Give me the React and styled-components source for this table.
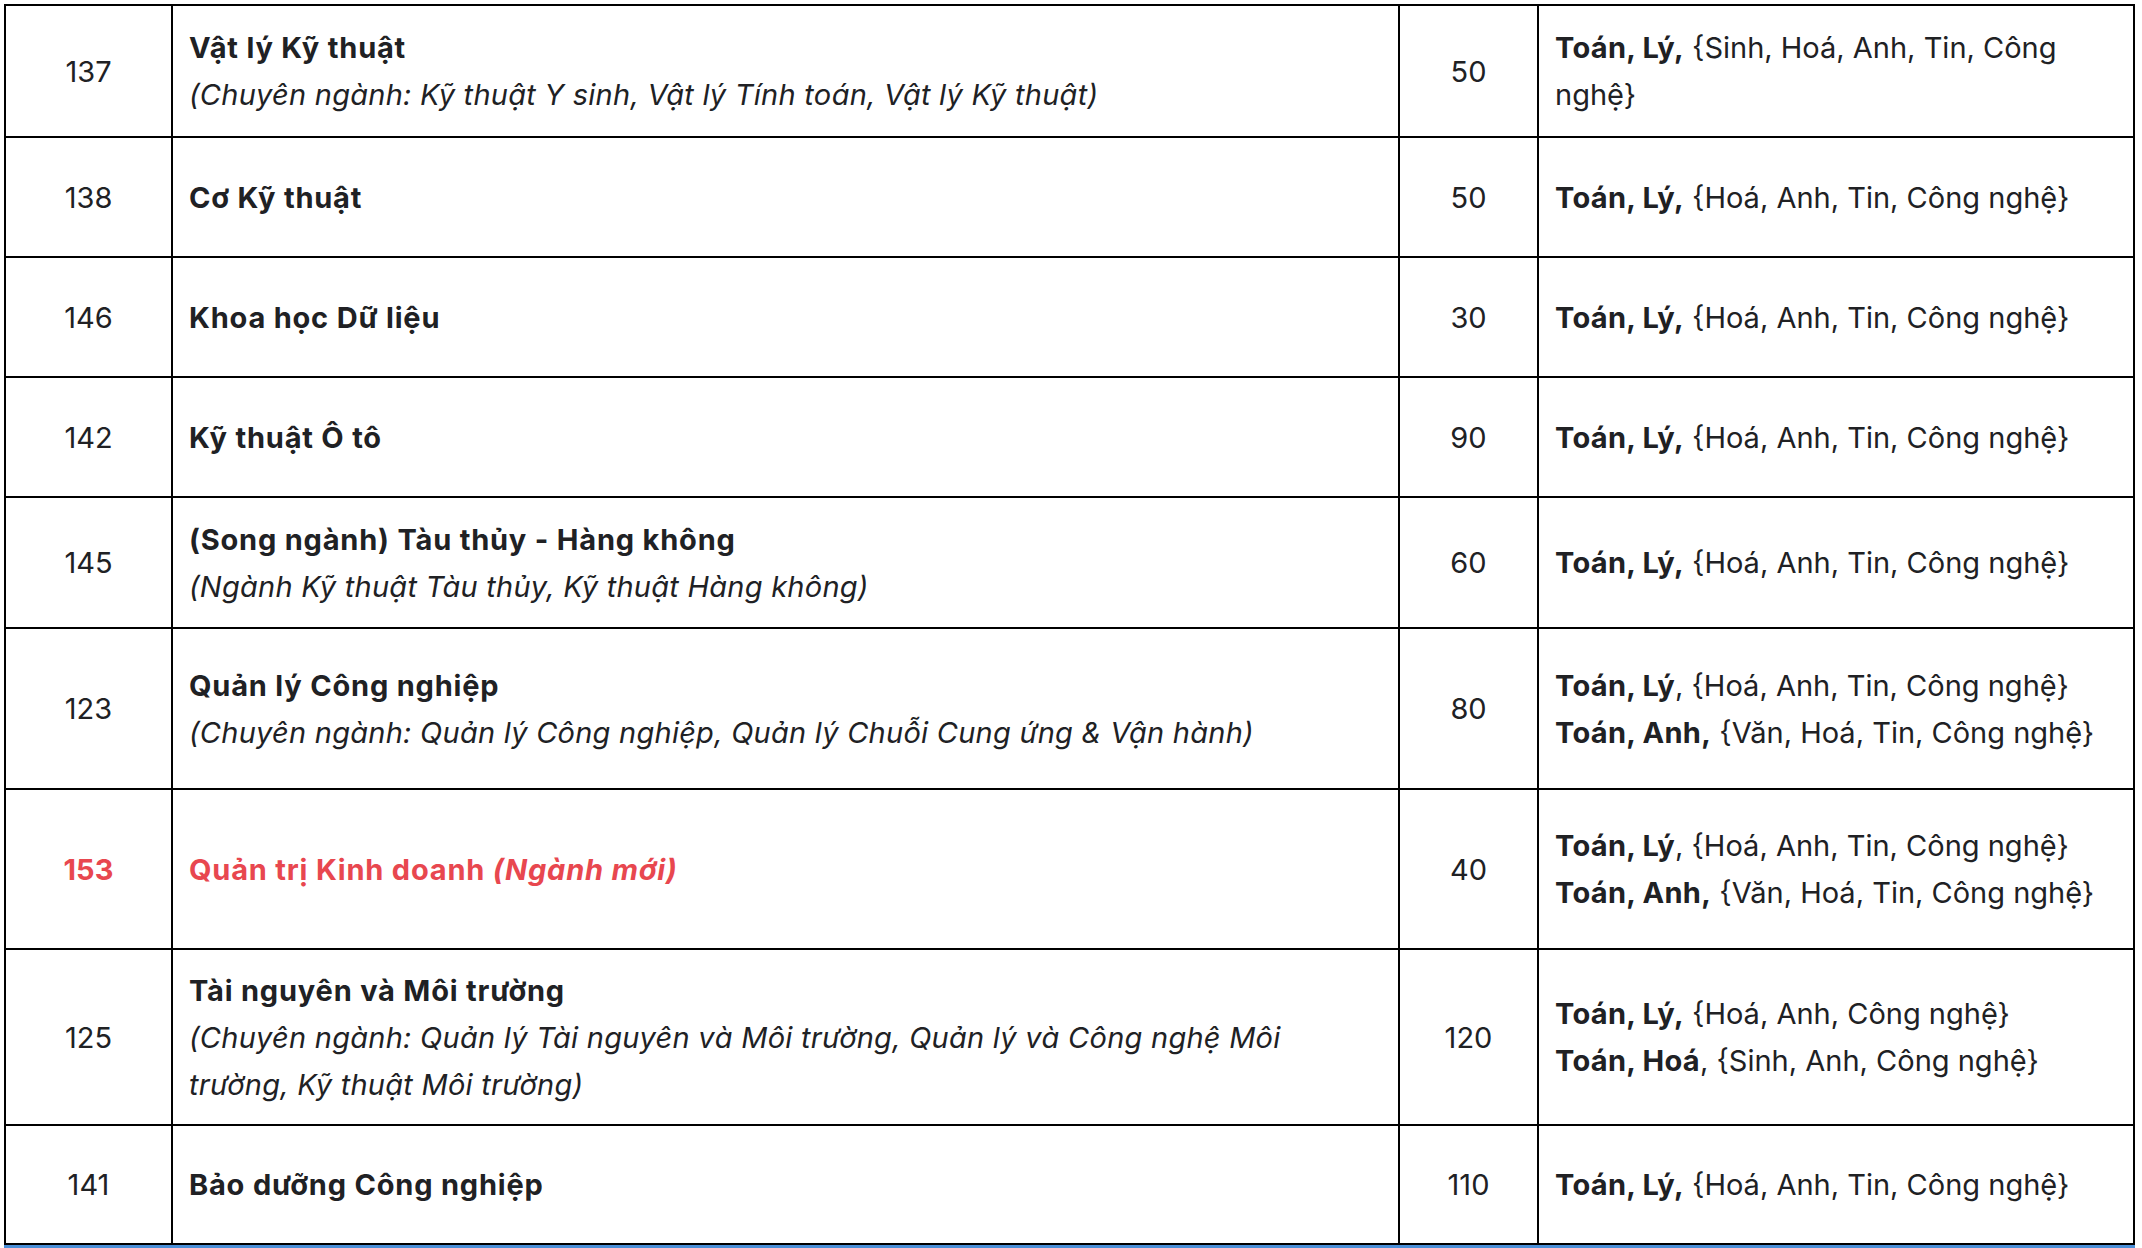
import React from 'react';
import styled, { createGlobalStyle } from 'styled-components';

// ─── Data ─────────────────────────────────────────────────────────────────────
const ROWS = [
  {
    code: '137', h: 132, quota: '50',
    name: 'Vật lý Kỹ thuật',
    sub: '(Chuyên ngành: Kỹ thuật Y sinh, Vật lý Tính toán, Vật lý Kỹ thuật)',
    combos: [['Toán, Lý,', ' {Sinh, Hoá, Anh, Tin, Công nghệ}']],
  },
  {
    code: '138', h: 120, quota: '50',
    name: 'Cơ Kỹ thuật',
    combos: [['Toán, Lý,', ' {Hoá, Anh, Tin, Công nghệ}']],
  },
  {
    code: '146', h: 120, quota: '30',
    name: 'Khoa học Dữ liệu',
    combos: [['Toán, Lý,', ' {Hoá, Anh, Tin, Công nghệ}']],
  },
  {
    code: '142', h: 120, quota: '90',
    name: 'Kỹ thuật Ô tô',
    combos: [['Toán, Lý,', ' {Hoá, Anh, Tin, Công nghệ}']],
  },
  {
    code: '145', h: 131, quota: '60',
    name: '(Song ngành) Tàu thủy - Hàng không',
    sub: '(Ngành Kỹ thuật Tàu thủy, Kỹ thuật Hàng không)',
    combos: [['Toán, Lý,', ' {Hoá, Anh, Tin, Công nghệ}']],
  },
  {
    code: '123', h: 161, quota: '80',
    name: 'Quản lý Công nghiệp',
    sub: '(Chuyên ngành: Quản lý Công nghiệp, Quản lý Chuỗi Cung ứng & Vận hành)',
    combos: [
      ['Toán, Lý', ', {Hoá, Anh, Tin, Công nghệ}'],
      ['Toán, Anh,', ' {Văn, Hoá, Tin, Công nghệ}'],
    ],
  },
  {
    code: '153', h: 160, quota: '40', isNew: true,
    name: 'Quản trị Kinh doanh',
    tag: '(Ngành mới)',
    combos: [
      ['Toán, Lý', ', {Hoá, Anh, Tin, Công nghệ}'],
      ['Toán, Anh,', ' {Văn, Hoá, Tin, Công nghệ}'],
    ],
  },
  {
    code: '125', h: 176, quota: '120',
    name: 'Tài nguyên và Môi trường',
    sub: '(Chuyên ngành: Quản lý Tài nguyên và Môi trường, Quản lý và Công nghệ Môi trường, Kỹ thuật Môi trường)',
    combos: [
      ['Toán, Lý,', ' {Hoá, Anh, Công nghệ}'],
      ['Toán, Hoá', ', {Sinh, Anh, Công nghệ}'],
    ],
  },
  {
    code: '141', h: 119, quota: '110',
    name: 'Bảo dưỡng Công nghiệp',
    combos: [['Toán, Lý,', ' {Hoá, Anh, Tin, Công nghệ}']],
  },
];

// ─── Component ────────────────────────────────────────────────────────────────
export default function App() {
  return (
    <>
      <GlobalStyle />
      <Page>
        <Table>
          <colgroup>
            <col style={{ width: 167 }} />
            <col style={{ width: 1227 }} />
            <col style={{ width: 139 }} />
            <col style={{ width: 596 }} />
          </colgroup>
          <tbody>
            {ROWS.map((r) => (
              <tr key={r.code}>
                <CodeCell $h={r.h} $red={r.isNew}>{r.code}</CodeCell>
                <NameCell>
                  <Name $red={r.isNew}>
                    {r.name}
                    {r.tag && <> <i>{r.tag}</i></>}
                  </Name>
                  {r.sub && <Sub>{r.sub}</Sub>}
                </NameCell>
                <QuotaCell>{r.quota}</QuotaCell>
                <ComboCell>
                  {r.combos.map(([main, rest], i) => (
                    <Combo key={i}>
                      <b>{main}</b>{rest}
                    </Combo>
                  ))}
                </ComboCell>
              </tr>
            ))}
          </tbody>
        </Table>
        <BlueEdge />
      </Page>
    </>
  );
}

// ─── Styles ───────────────────────────────────────────────────────────────────
const GlobalStyle = createGlobalStyle`
  * { box-sizing: border-box; }
  body {
    margin: 0;
    background: #fff;
    font-family: 'Inter', 'Noto Sans', sans-serif;
    color: #202124;
  }
`;

const Page = styled.div`
  padding: 4px 0 0 4px;
  width: 2142px;
`;

const Table = styled.table`
  width: 2131px;
  table-layout: fixed;
  border-collapse: collapse;
  border: 2px solid #000;

  td {
    border: 2px solid #000;
    vertical-align: middle;
    font-size: 29px;
    line-height: 47px;
    letter-spacing: 0;
  }
`;

const CodeCell = styled.td`
  height: ${({ $h }) => $h}px;
  text-align: center;
  padding: 0;
  color: ${({ $red }) => ($red ? '#e8474f' : '#202124')};
  font-weight: ${({ $red }) => ($red ? 700 : 400)};
`;

const NameCell = styled.td`
  padding: 0 16px;
`;

const Name = styled.div`
  font-weight: 700;
  letter-spacing: 0.8px;
  color: ${({ $red }) => ($red ? '#e8474f' : '#202124')};
`;

const Sub = styled.div`
  font-style: italic;
  letter-spacing: 0.25px;
`;

const QuotaCell = styled.td`
  text-align: center;
  padding: 0;
`;

const ComboCell = styled.td`
  padding: 0 16px;
`;

const Combo = styled.div`
  b { font-weight: 700; letter-spacing: 0.3px; }
`;

const BlueEdge = styled.div`
  width: 2131px;
  height: 4px;
  background: #4a8fd8;
`;
